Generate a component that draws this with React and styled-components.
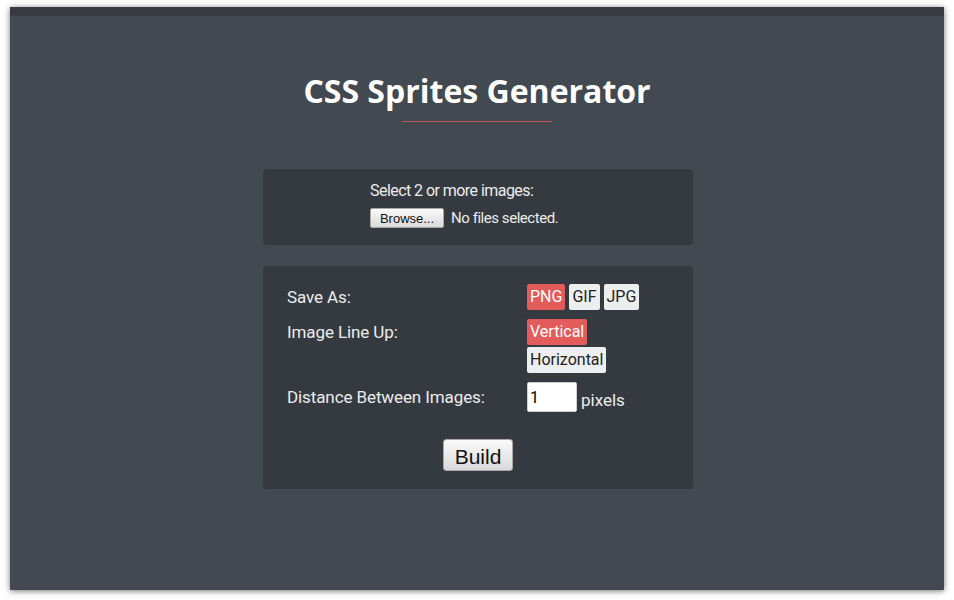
import React, { useState } from "react";
import styled, { createGlobalStyle } from "styled-components";

const Page = createGlobalStyle`
  html, body {
    margin: 0;
    background: #ffffff;
  }
  body {
    padding: 7px 10px 10px 10px;
  }
`;

const Window = styled.div`
  width: 934px;
  height: 583px;
  background: #434950;
  box-shadow: 0 1px 6px rgba(0, 0, 0, 0.55);
  display: flex;
  flex-direction: column;
  align-items: center;
  font-family: Roboto, "Liberation Sans", sans-serif;
  color: #ececec;
`;

const TopBar = styled.div`
  align-self: stretch;
  height: 9px;
  background: #383c42;
`;

const Title = styled.h1`
  margin: 57px 0 0;
  font-family: "Open Sans", "Liberation Sans", sans-serif;
  font-weight: 700;
  font-size: 32px;
  line-height: 36px;
  color: #ffffff;
`;

const Rule = styled.div`
  width: 150px;
  height: 1px;
  margin-top: 12px;
  background: #c2575b;
`;

const Panel = styled.div`
  width: 430px;
  box-sizing: border-box;
  border-radius: 4px;
  background: #353a40;
  margin: ${p => p.$gap}px 0 0 2px;
`;

const UploadPanel = styled(Panel)`
  height: 76px;
  padding: 12px 0 0 107px;
`;

const Prompt = styled.div`
  font-size: 16px;
  line-height: 20px;
  letter-spacing: -0.55px;
`;

const FileRow = styled.div`
  display: flex;
  align-items: center;
  margin-top: 7px;
`;

const NativeButton = styled.button`
  box-sizing: border-box;
  padding: 0;
  font-family: "Liberation Sans", Arial, sans-serif;
  color: #111;
  background: linear-gradient(#fafafa, #dadada);
  border: 1px solid #a8a8a8;
  border-radius: 2px;
  cursor: pointer;
`;

const BrowseButton = styled(NativeButton)`
  width: 74px;
  height: 20px;
  font-size: 13px;
`;

const FileStatus = styled.span`
  margin-left: 7px;
  font-size: 15px;
  letter-spacing: -0.45px;
`;

const SettingsPanel = styled(Panel)`
  padding: 18px 24px 18px;
  display: grid;
  grid-template-columns: 240px 1fr;
  row-gap: 9px;
`;

const Label = styled.div`
  font-size: 17px;
  line-height: ${p => p.$lh}px;
  letter-spacing: -0.1px;
`;

const Options = styled.div`
  width: 130px;
  display: flex;
  flex-wrap: wrap;
  gap: 2px 4px;
`;

const Option = styled.span`
  height: 26px;
  line-height: 26px;
  padding: 0 3px;
  font-size: 16px;
  border-radius: 2px;
  cursor: pointer;
  background: ${p => (p.$active ? "#e45b5b" : "#eceeef")};
  color: ${p => (p.$active ? "#ffffff" : "#222222")};
`;

const DistanceField = styled.div`
  display: flex;
  align-items: flex-end;
`;

const NumberInput = styled.input`
  box-sizing: border-box;
  width: 50px;
  height: 30px;
  padding: 0 2px;
  border: 1px solid #d0d0d0;
  border-radius: 2px;
  background: #ffffff;
  font-family: Roboto, "Liberation Sans", sans-serif;
  font-size: 16px;
  color: #000;
  outline: none;
`;

const Unit = styled.span`
  margin: 0 0 -1px 4px;
  font-size: 17px;
  line-height: 26px;
`;

const BuildButton = styled(NativeButton)`
  grid-column: 1 / -1;
  justify-self: center;
  margin-top: 18px;
  width: 70px;
  height: 32px;
  font-size: 21px;
  line-height: 34px;
  border-radius: 3px;
`;

function OptionGroup({ items, value, onChange }) {
  return (
    <Options>
      {items.map(item => (
        <Option key={item} $active={item === value} onClick={() => onChange(item)}>
          {item}
        </Option>
      ))}
    </Options>
  );
}

export default function App() {
  const [format, setFormat] = useState("PNG");
  const [lineUp, setLineUp] = useState("Vertical");
  const [distance, setDistance] = useState("1");

  return (
    <React.Fragment>
      <Page />
      <Window>
        <TopBar />
        <Title>CSS Sprites Generator</Title>
        <Rule />
        <UploadPanel $gap={47}>
          <Prompt>Select 2 or more images:</Prompt>
          <FileRow>
            <BrowseButton>Browse...</BrowseButton>
            <FileStatus>No files selected.</FileStatus>
          </FileRow>
        </UploadPanel>
        <SettingsPanel $gap={21}>
          <Label $lh={26}>Save As:</Label>
          <OptionGroup items={["PNG", "GIF", "JPG"]} value={format} onChange={setFormat} />
          <Label $lh={26}>Image Line Up:</Label>
          <OptionGroup items={["Vertical", "Horizontal"]} value={lineUp} onChange={setLineUp} />
          <Label $lh={30}>Distance Between Images:</Label>
          <DistanceField>
            <NumberInput value={distance} onChange={e => setDistance(e.target.value)} />
            <Unit>pixels</Unit>
          </DistanceField>
          <BuildButton>Build</BuildButton>
        </SettingsPanel>
      </Window>
    </React.Fragment>
  );
}
